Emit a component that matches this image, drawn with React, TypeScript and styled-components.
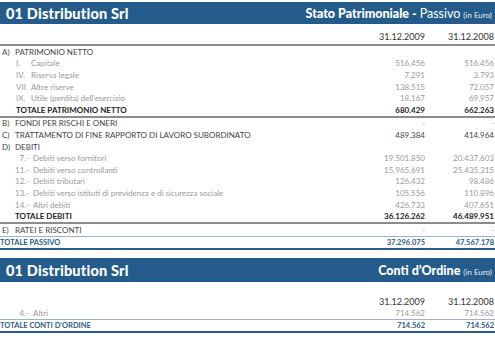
import React from "react";
import styled, { createGlobalStyle } from "styled-components";

const Global = createGlobalStyle`
  html, body { margin: 0; padding: 0; background: #fff; }
  body { font-family: "Lato", "Liberation Sans", sans-serif; }
`;

const Page = styled.div`
  width: 495px;
  padding-top: 2px;
  display: flex;
  flex-direction: column;
`;

const Section = styled.section<{ $gap?: number }>`
  display: flex;
  flex-direction: column;
  margin-top: ${(p) => p.$gap ?? 0}px;
`;

const HeaderBar = styled.div<{ $h: number }>`
  height: ${(p) => p.$h}px;
  background: #245b8b;
  color: #fff;
  display: flex;
  align-items: center;
  justify-content: space-between;
  padding: 0 3px 0 6px;
  box-sizing: border-box;
`;

const Title = styled.div`
  font-family: "Lato", sans-serif;
  font-weight: 900;
  font-size: 14.5px;
  letter-spacing: 0.2px;
`;

const SubTitle = styled.div`
  font-family: "Lato", sans-serif;
  font-size: 12.5px;
  font-weight: 900;
  white-space: nowrap;
`;

const Light = styled.span`
  font-weight: 400;
`;

const Small = styled.span`
  font-weight: 400;
  font-size: 8px;
  opacity: 0.9;
`;

const DateRow = styled.div<{ $h: number; $pad: number }>`
  height: ${(p) => p.$h}px;
  display: grid;
  grid-template-columns: 1fr 70px 69px;
  align-items: center;
  padding-right: 1px;
  padding-top: ${(p) => p.$pad}px;
  box-sizing: border-box;
  font-size: 9px;
  color: #333;
  font-weight: 400;
`;

const DateCell = styled.div`
  text-align: right;
`;

const Rule = styled.div<{ $color: string; $h: number }>`
  height: ${(p) => p.$h}px;
  background: ${(p) => p.$color};
`;

type Kind = "head" | "sub" | "total" | "grand";

const Row = styled.div<{ $kind: Kind }>`
  height: 11.6px;
  display: grid;
  grid-template-columns: 1fr 70px 69px;
  align-items: center;
  padding-right: 1px;
  font-size: ${(p) => (p.$kind === "grand" ? 7.5 : 8)}px;
  font-weight: ${(p) => (p.$kind === "total" || p.$kind === "grand" ? 700 : 400)};
  color: ${(p) =>
    p.$kind === "sub" ? "#9a9a9a" : p.$kind === "grand" ? "#2b5b8a" : p.$kind === "total" ? "#222" : "#444"};
  white-space: nowrap;
`;

const Label = styled.div<{ $indent: number }>`
  display: flex;
  padding-left: ${(p) => p.$indent}px;
`;

const Letter = styled.span`
  width: 13px;
`;

const Num = styled.span<{ $w: number; $right?: boolean }>`
  width: ${(p) => p.$w}px;
  text-align: ${(p) => (p.$right ? "right" : "left")};
  padding-right: ${(p) => (p.$right ? 4 : 0)}px;
  box-sizing: border-box;
`;

const Value = styled.div`
  text-align: right;
`;

const Dash = styled.span`
  font-size: 7px;
  font-weight: 400;
  color: #9a9a9a;
`;

type Item = {
  kind: Kind;
  letter?: string;
  num?: string;
  numRight?: boolean;
  label: string;
  a?: string;
  b?: string;
  indent?: number;
};

const V = ({ v }: { v?: string }) => <Value>{v === "-" ? <Dash>-</Dash> : v}</Value>;

const Line = ({ it }: { it: Item }) => (
  <Row $kind={it.kind}>
    <Label $indent={it.indent ?? 2}>
      {it.letter !== undefined && <Letter>{it.letter}</Letter>}
      {it.num !== undefined && (
        <Num $w={it.numRight ? 18 : 15} $right={it.numRight}>
          {it.num}
        </Num>
      )}
      {it.label}
    </Label>
    <V v={it.a} />
    <V v={it.b} />
  </Row>
);

const A: Item[] = [
  { kind: "head", letter: "A)", label: "PATRIMONIO NETTO" },
  { kind: "sub", num: "I.", label: "Capitale", a: "516.456", b: "516.456", indent: 16 },
  { kind: "sub", num: "IV.", label: "Riserva legale", a: "7.291", b: "3.793", indent: 16 },
  { kind: "sub", num: "VII.", label: "Altre riserve", a: "138.515", b: "72.057", indent: 16 },
  { kind: "sub", num: "IX.", label: "Utile (perdita) dell’esercizio", a: "18.167", b: "69.957", indent: 16 },
  { kind: "total", label: "TOTALE PATRIMONIO NETTO", a: "680.429", b: "662.263", indent: 16 },
];

const BD: Item[] = [
  { kind: "head", letter: "B)", label: "FONDI PER RISCHI E ONERI", a: "-", b: "-" },
  { kind: "head", letter: "C)", label: "TRATTAMENTO DI FINE RAPPORTO DI LAVORO SUBORDINATO", a: "489.384", b: "414.964" },
  { kind: "head", letter: "D)", label: "DEBITI" },
  { kind: "sub", num: "7.-", numRight: true, label: "Debiti verso fornitori", a: "19.501.850", b: "20.437.603", indent: 15 },
  { kind: "sub", num: "11.-", numRight: true, label: "Debiti verso controllanti", a: "15.965.691", b: "25.435.315", indent: 15 },
  { kind: "sub", num: "12.-", numRight: true, label: "Debiti tributari", a: "126.432", b: "98.486", indent: 15 },
  { kind: "sub", num: "13.-", numRight: true, label: "Debiti verso istituti di previdenza e di sicurezza sociale", a: "105.556", b: "110.896", indent: 15 },
  { kind: "sub", num: "14.-", numRight: true, label: "Altri debiti", a: "426.733", b: "407.651", indent: 15 },
  { kind: "total", label: "TOTALE DEBITI", a: "36.126.262", b: "46.489.951", indent: 15 },
];

export default function App() {
  return (
    <>
      <Global />
      <Page>
        <Section>
          <HeaderBar $h={22}>
            <Title>01 Distribution Srl</Title>
            <SubTitle>
              Stato Patrimoniale - <Light>Passivo</Light> <Small>(in Euro)</Small>
            </SubTitle>
          </HeaderBar>
          <DateRow $h={20} $pad={4}>
            <span />
            <DateCell>31.12.2009</DateCell>
            <DateCell>31.12.2008</DateCell>
          </DateRow>
          <Rule $color="#8c8c8c" $h={2} />
          {A.map((it, i) => (
            <Line key={i} it={it} />
          ))}
          <Rule $color="#8c8c8c" $h={2} />
          {BD.map((it, i) => (
            <Line key={i} it={it} />
          ))}
          <Rule $color="#8c8c8c" $h={2} />
          <Line it={{ kind: "head", letter: "E)", label: "RATEI E RISCONTI", a: "-", b: "-" }} />
          <Rule $color="#9bb3cc" $h={1} />
          <Line it={{ kind: "grand", label: "TOTALE PASSIVO", a: "37.296.075", b: "47.567.178", indent: 0 }} />
          <Rule $color="#2b5b8a" $h={2} />
        </Section>
        <Section $gap={8}>
          <HeaderBar $h={24}>
            <Title>01 Distribution Srl</Title>
            <SubTitle>
              Conti d’Ordine <Small>(in Euro)</Small>
            </SubTitle>
          </HeaderBar>
          <DateRow $h={25} $pad={13}>
            <span />
            <DateCell>31.12.2009</DateCell>
            <DateCell>31.12.2008</DateCell>
          </DateRow>
          <Line it={{ kind: "sub", num: "4.-", numRight: true, label: "Altri", a: "714.562", b: "714.562", indent: 15 }} />
          <Rule $color="#9bb3cc" $h={1} />
          <Line it={{ kind: "grand", label: "TOTALE CONTI D’ORDINE", a: "714.562", b: "714.562", indent: 0 }} />
          <Rule $color="#2b5b8a" $h={2} />
        </Section>
      </Page>
    </>
  );
}
